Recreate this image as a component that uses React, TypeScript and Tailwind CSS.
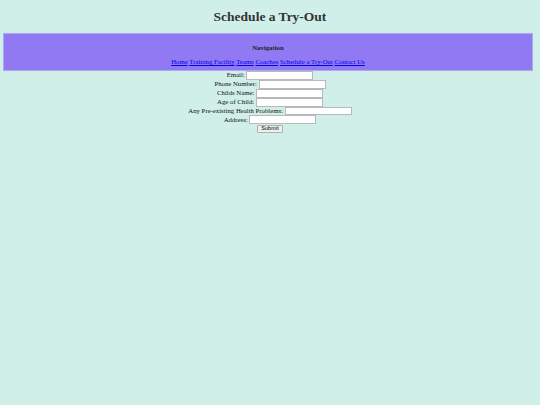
const links = ['Home', 'Training Facility', 'Teams', 'Coaches', 'Schedule a Try-Out', 'Contact Us'];

const fields = ['Email:', 'Phone Number:', 'Childs Name:', 'Age of Child:', 'Any Pre-existing Health Problems:', 'Address:'];

export default function App() {
  return (
    <div className="min-h-[405px] bg-[#d0efe9] font-['Liberation_Serif',serif] text-black">
      <h1 className="pt-[8.5px] pb-[9px] text-center text-[13.5px] font-bold leading-[15.5px] text-[#333]">
        Schedule a Try-Out
      </h1>

      <div className="ml-[3px] flex h-[38px] w-[530px] flex-col items-center border border-[#aaa9f1] bg-[#9079f3] pt-[10px]">
        <h4 className="text-[6.75px] font-bold leading-[8px] text-[#222]">Navigation</h4>
        <p className="mt-[6px] text-center text-[6.75px] leading-[8px]">
          {links.map((l, i) => (
            <span key={l}>
              <a href="#" className="text-[#0000ee] underline">
                {l}
              </a>
              {i < links.length - 1 ? ' ' : ''}
            </span>
          ))}
        </p>
      </div>

      <form className="flex flex-col items-center text-[6.75px] leading-[8px]" onSubmit={(e) => e.preventDefault()}>
        {fields.map((f) => (
          <div key={f} className="flex h-[8.9px] items-center gap-[1.7px]">
            <label className="text-[#111]">{f}</label>
            <input type="text" className="box-border h-[8.9px] w-[67px] border border-[#b8b8b8] bg-white" />
          </div>
        ))}
        <div className="flex h-[8.9px] items-center">
          <button
            type="submit"
            className="box-border h-[8px] w-[25.5px] rounded-[1px] border border-[#b0b0b0] bg-[#efefef] font-['Liberation_Sans',Arial,sans-serif] text-[5.6px] leading-none text-black"
          >
            Submit
          </button>
        </div>
      </form>
    </div>
  );
}
